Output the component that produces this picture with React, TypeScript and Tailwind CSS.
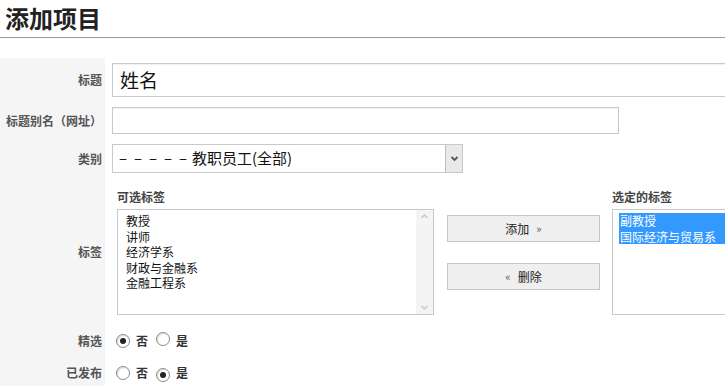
import React from 'react'

const cjk = { fontFamily: '"Microsoft YaHei", "Noto Sans CJK SC", sans-serif' }

function Radio({ checked }: { checked?: boolean }) {
  return (
    <span className="inline-flex w-[14px] h-[14px] rounded-full border border-[#8a8a8a] bg-white items-center justify-center shadow-[inset_1px_1px_1px_rgba(0,0,0,0.15)]">
      {checked && <span className="block w-[6px] h-[6px] rounded-full bg-[#222]" />}
    </span>
  )
}

function Label({ children }: { children: React.ReactNode }) {
  return (
    <div className="w-[105px] shrink-0 bg-[#f5f5f5] flex items-center justify-end pr-[3px] text-[12px] font-bold text-[#555]">
      {children}
    </div>
  )
}

function FakeScroll() {
  return (
    <div className="w-[17px] shrink-0 bg-[#f4f4f4] flex flex-col justify-between items-center py-[2px] text-[#c8c8c8]">
      <svg width="9" height="9" viewBox="0 0 9 9"><path d="M1.5 6 L4.5 3 L7.5 6" fill="none" stroke="currentColor" strokeWidth="1.5" /></svg>
      <svg width="9" height="9" viewBox="0 0 9 9"><path d="M1.5 3 L4.5 6 L7.5 3" fill="none" stroke="currentColor" strokeWidth="1.5" /></svg>
    </div>
  )
}

export default function App() {
  const available = ['教授', '讲师', '经济学系', '财政与金融系', '金融工程系']
  const selected = ['副教授', '国际经济与贸易系']

  return (
    <div className="w-[725px] h-[386px] overflow-hidden bg-white text-[#222]" style={cjk}>
      <div className="h-[38px] border-b border-[#9a9a9a] pl-[5px] pt-[2px]">
        <h1 className="text-[24px] font-bold leading-[32px] text-[#222]">添加项目</h1>
      </div>

      <div className="mt-[20px]">
        <div className="flex h-[44px]">
          <Label>标题</Label>
          <div className="flex items-center pl-[7px]">
            <div className="w-[700px] h-[34px] border border-[#c9c9c9] flex items-center pl-[7px] text-[19px] text-[#111] shadow-[inset_0_1px_1px_rgba(0,0,0,0.06)]">
              姓名
            </div>
          </div>
        </div>

        <div className="flex h-[37px]">
          <Label>标题别名（网址）</Label>
          <div className="flex items-center pl-[7px]">
            <div className="w-[507px] h-[27px] border border-[#c9c9c9] shadow-[inset_0_1px_1px_rgba(0,0,0,0.06)]" />
          </div>
        </div>

        <div className="flex h-[39px]">
          <Label>类别</Label>
          <div className="flex items-center pl-[7px]">
            <div className="w-[351px] h-[29px] border border-[#c9c9c9] flex items-stretch">
              <div className="flex-1 flex items-center pl-[6px] text-[15px] text-[#111]">
                {[0, 1, 2, 3, 4].map((i) => (
                  <span key={i} className="inline-block w-[15px]">–</span>
                ))}
                <span className="ml-[-2px]">教职员工(全部)</span>
              </div>
              <div className="w-[17px] border-l border-[#bdbdbd] bg-[#e9e9e9] flex items-center justify-center text-[#555]">
                <svg width="9" height="9" viewBox="0 0 9 9"><path d="M1.5 3 L4.5 6 L7.5 3" fill="none" stroke="currentColor" strokeWidth="1.8" /></svg>
              </div>
            </div>
          </div>
        </div>

        <div className="flex h-[147px]">
          <Label>标签</Label>
          <div className="flex pl-[12px] pt-[12px]">
            <div className="flex flex-col">
              <div className="h-[19px] text-[12px] font-bold text-[#444] leading-[14px]">可选标签</div>
              <div className="w-[317px] h-[106px] border border-[#c9c9c9] flex">
                <div className="flex-1 pl-[8px] pt-[3px] text-[12px] leading-[15.5px] text-[#111]">
                  {available.map((t) => (
                    <div key={t}>{t}</div>
                  ))}
                </div>
                <FakeScroll />
              </div>
            </div>

            <div className="flex flex-col ml-[13px] pt-[25px] gap-[21px]">
              <button className="w-[153px] h-[27px] border border-[#c6c6c6] bg-[#efefef] text-[12px] text-[#222] flex items-center justify-center gap-[7px]">
                <span>添加</span><span className="text-[11px] text-[#555]">»</span>
              </button>
              <button className="w-[153px] h-[27px] border border-[#c6c6c6] bg-[#efefef] text-[12px] text-[#222] flex items-center justify-center gap-[7px]">
                <span className="text-[11px] text-[#555]">«</span><span>删除</span>
              </button>
            </div>

            <div className="flex flex-col ml-[12px]">
              <div className="h-[19px] text-[12px] font-bold text-[#444] leading-[14px]">选定的标签</div>
              <div className="w-[200px] h-[106px] border border-[#c9c9c9] pl-[6px] pt-[3px] text-[12px] leading-[15.5px]">
                {selected.map((t) => (
                  <div key={t} className="bg-[#3399ff] text-white pl-[1px]">{t}</div>
                ))}
              </div>
            </div>
          </div>
        </div>

        <div className="flex h-[32px]">
          <Label>精选</Label>
          <div className="flex items-center pl-[11px] text-[12px] font-bold text-[#333]">
            <Radio checked />
            <span className="ml-[6px]">否</span>
            <span className="ml-[8px]"><Radio /></span>
            <span className="ml-[6px]">是</span>
          </div>
        </div>

        <div className="flex h-[32px]">
          <Label>已发布</Label>
          <div className="flex items-center pl-[11px] text-[12px] font-bold text-[#333]">
            <Radio />
            <span className="ml-[6px]">否</span>
            <span className="ml-[8px]"><Radio checked /></span>
            <span className="ml-[6px]">是</span>
          </div>
        </div>
      </div>
    </div>
  )
}
